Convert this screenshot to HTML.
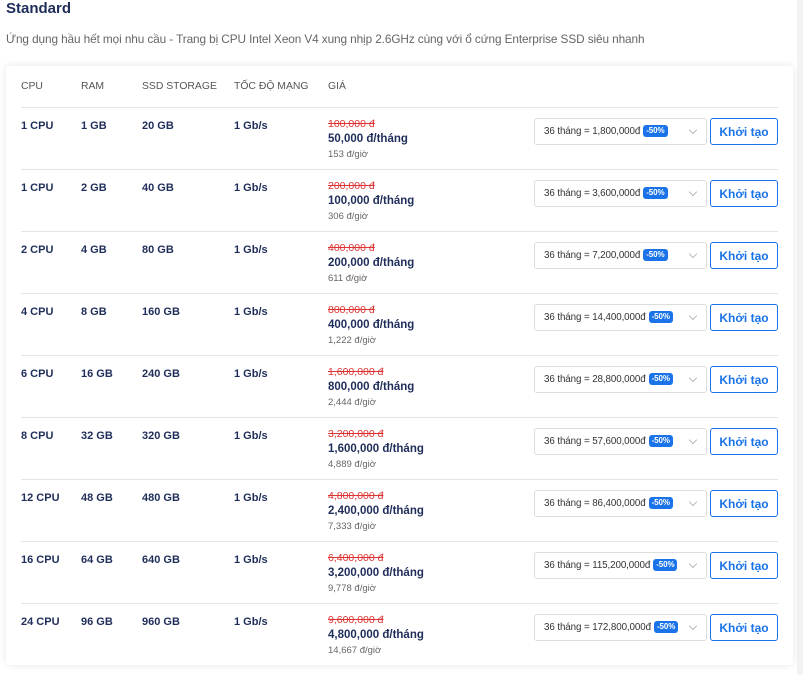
<!DOCTYPE html><html><head><meta charset="utf-8"><style>
*{margin:0;padding:0;box-sizing:border-box}
body{width:803px;height:675px;background:#fff;font-family:"Liberation Sans",sans-serif;position:relative;overflow:hidden}
.side{position:absolute;left:797px;top:0;width:6px;height:675px;background:#f3f3f3}
h1{position:absolute;left:6px;top:0;font-size:15px;color:#1f2d5a;font-weight:bold}
.sub{position:absolute;left:6px;top:32px;font-size:11.8px;color:#666;letter-spacing:-0.1px}
.card{position:absolute;left:6px;top:66px;width:787px;height:599px;background:#fff;border-radius:4px;box-shadow:0 0 8px rgba(0,0,0,.1)}
.hd{position:absolute;top:81px;font-size:10.4px;color:#555}
.row{position:absolute;left:21px;width:757px;height:62px;border-top:1px solid #e4e4e4}
.c{position:absolute;top:12px;font-size:11px;font-weight:bold;color:#1f2d5a}
.old{position:absolute;left:307px;top:10px;font-size:10.5px;color:#d33;text-decoration:line-through}
.pr{position:absolute;left:307px;top:25px;font-size:11.5px;font-weight:bold;color:#1f2d5a}
.hr{position:absolute;left:307px;top:41px;font-size:9.5px;color:#666}
.sel{position:absolute;left:513px;top:10px;width:173px;height:27px;border:1px solid #ddd;border-radius:3px;font-size:9.8px;color:#333;padding:0 0 0 9px;line-height:25px;letter-spacing:-0.1px}
.b{display:inline-block;background:#1a73e8;color:#fff;font-size:8px;font-weight:bold;border-radius:3px;padding:0 3px;line-height:12px;margin-left:3px;vertical-align:1px}
.ar{position:absolute;right:10px;top:8px;width:6px;height:6px;border-right:1px solid #bbb;border-bottom:1px solid #bbb;transform:rotate(45deg)}
.btn{position:absolute;left:689px;top:10px;width:68px;height:27px;border:1px solid #1a73e8;border-radius:3px;color:#1a73e8;font-size:12px;font-weight:bold;text-align:center;line-height:27px}
</style></head><body>
<div class="side"></div>
<h1>Standard</h1>
<div class="sub">Ứng dụng hầu hết mọi nhu cầu - Trang bị CPU Intel Xeon V4 xung nhịp 2.6GHz cùng với ổ cứng Enterprise SSD siêu nhanh</div>
<div class="card"></div>
<div class="hd" style="left:21px">CPU</div><div class="hd" style="left:81px">RAM</div><div class="hd" style="left:142px">SSD STORAGE</div><div class="hd" style="left:234px">TỐC ĐỘ MẠNG</div><div class="hd" style="left:328px">GIÁ</div>
<div class="row" style="top:107px"><div class="c" style="left:0">1 CPU</div><div class="c" style="left:60px">1 GB</div><div class="c" style="left:121px">20 GB</div><div class="c" style="left:213px">1 Gb/s</div><div class="old">100,000 đ</div><div class="pr">50,000 đ/tháng</div><div class="hr">153 đ/giờ</div><div class="sel">36 tháng = 1,800,000đ<span class="b">-50%</span><div class="ar"></div></div><div class="btn">Khởi tạo</div></div>
<div class="row" style="top:169px"><div class="c" style="left:0">1 CPU</div><div class="c" style="left:60px">2 GB</div><div class="c" style="left:121px">40 GB</div><div class="c" style="left:213px">1 Gb/s</div><div class="old">200,000 đ</div><div class="pr">100,000 đ/tháng</div><div class="hr">306 đ/giờ</div><div class="sel">36 tháng = 3,600,000đ<span class="b">-50%</span><div class="ar"></div></div><div class="btn">Khởi tạo</div></div>
<div class="row" style="top:231px"><div class="c" style="left:0">2 CPU</div><div class="c" style="left:60px">4 GB</div><div class="c" style="left:121px">80 GB</div><div class="c" style="left:213px">1 Gb/s</div><div class="old">400,000 đ</div><div class="pr">200,000 đ/tháng</div><div class="hr">611 đ/giờ</div><div class="sel">36 tháng = 7,200,000đ<span class="b">-50%</span><div class="ar"></div></div><div class="btn">Khởi tạo</div></div>
<div class="row" style="top:293px"><div class="c" style="left:0">4 CPU</div><div class="c" style="left:60px">8 GB</div><div class="c" style="left:121px">160 GB</div><div class="c" style="left:213px">1 Gb/s</div><div class="old">800,000 đ</div><div class="pr">400,000 đ/tháng</div><div class="hr">1,222 đ/giờ</div><div class="sel">36 tháng = 14,400,000đ<span class="b">-50%</span><div class="ar"></div></div><div class="btn">Khởi tạo</div></div>
<div class="row" style="top:355px"><div class="c" style="left:0">6 CPU</div><div class="c" style="left:60px">16 GB</div><div class="c" style="left:121px">240 GB</div><div class="c" style="left:213px">1 Gb/s</div><div class="old">1,600,000 đ</div><div class="pr">800,000 đ/tháng</div><div class="hr">2,444 đ/giờ</div><div class="sel">36 tháng = 28,800,000đ<span class="b">-50%</span><div class="ar"></div></div><div class="btn">Khởi tạo</div></div>
<div class="row" style="top:417px"><div class="c" style="left:0">8 CPU</div><div class="c" style="left:60px">32 GB</div><div class="c" style="left:121px">320 GB</div><div class="c" style="left:213px">1 Gb/s</div><div class="old">3,200,000 đ</div><div class="pr">1,600,000 đ/tháng</div><div class="hr">4,889 đ/giờ</div><div class="sel">36 tháng = 57,600,000đ<span class="b">-50%</span><div class="ar"></div></div><div class="btn">Khởi tạo</div></div>
<div class="row" style="top:479px"><div class="c" style="left:0">12 CPU</div><div class="c" style="left:60px">48 GB</div><div class="c" style="left:121px">480 GB</div><div class="c" style="left:213px">1 Gb/s</div><div class="old">4,800,000 đ</div><div class="pr">2,400,000 đ/tháng</div><div class="hr">7,333 đ/giờ</div><div class="sel">36 tháng = 86,400,000đ<span class="b">-50%</span><div class="ar"></div></div><div class="btn">Khởi tạo</div></div>
<div class="row" style="top:541px"><div class="c" style="left:0">16 CPU</div><div class="c" style="left:60px">64 GB</div><div class="c" style="left:121px">640 GB</div><div class="c" style="left:213px">1 Gb/s</div><div class="old">6,400,000 đ</div><div class="pr">3,200,000 đ/tháng</div><div class="hr">9,778 đ/giờ</div><div class="sel">36 tháng = 115,200,000đ<span class="b">-50%</span><div class="ar"></div></div><div class="btn">Khởi tạo</div></div>
<div class="row" style="top:603px"><div class="c" style="left:0">24 CPU</div><div class="c" style="left:60px">96 GB</div><div class="c" style="left:121px">960 GB</div><div class="c" style="left:213px">1 Gb/s</div><div class="old">9,600,000 đ</div><div class="pr">4,800,000 đ/tháng</div><div class="hr">14,667 đ/giờ</div><div class="sel">36 tháng = 172,800,000đ<span class="b">-50%</span><div class="ar"></div></div><div class="btn">Khởi tạo</div></div>
</body></html>
